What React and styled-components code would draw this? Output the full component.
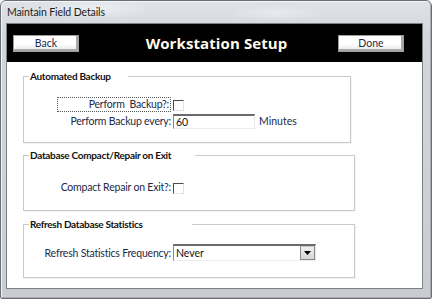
import styled, { createGlobalStyle } from 'styled-components';

const Global = createGlobalStyle`
  html, body {
    margin: 0;
    padding: 0;
    background: #ffffff;
  }
`;

// Styles
const Window = styled.div`
  box-sizing: border-box;
  width: 432px;
  height: 299px;
  display: flex;
  flex-direction: column;
  padding: 0 8px 9px 5px;
  border: 1px solid #6b6f75;
  border-radius: 6px 6px 2px 2px;
  background: linear-gradient(to bottom, #dfe3e8 0%, #d3d7dc 12%, #c9cdd2 100%);
  box-shadow: inset 1px 1px 0 #f4f6f8, inset -1px -1px 0 #a8acb1;
  font-family: Lato, "Noto Sans", sans-serif;
`;

const TitleBar = styled.div`
  height: 22px;
  display: flex;
  align-items: center;
  padding-left: 1px;
  font-size: 10.5px;
  letter-spacing: -0.1px;
  color: #1b1b1b;
  background: radial-gradient(ellipse 60px 10px at 90px 8px, rgba(255,255,255,0.45), transparent),
    radial-gradient(ellipse 50px 8px at 270px 12px, rgba(255,255,255,0.35), transparent);
`;

const Client = styled.div`
  flex: 1;
  display: flex;
  flex-direction: column;
  background: #ffffff;
  border: 1px solid #7d8187;
`;

const Header = styled.div`
  height: 38px;
  display: grid;
  grid-template-columns: 1fr auto 1fr;
  align-items: center;
  background: #000000;
  padding: 0 18px 0 6px;
`;

const Title = styled.div`
  padding-left: 16px;
  font-family: "Open Sans", "Noto Sans", sans-serif;
  font-weight: 700;
  font-size: 15px;
  color: #fffbe8;
  letter-spacing: 0.1px;
`;

const Button = styled.button`
  justify-self: ${p => (p.$right ? 'end' : 'start')};
  box-sizing: border-box;
  width: 66px;
  height: 17px;
  padding: 0;
  font-family: Lato, "Noto Sans", sans-serif;
  font-size: 10.5px;
  line-height: 13px;
  color: #1c2a48;
  background: linear-gradient(to bottom, #ffffff 0%, #ffffff 55%, #e4e4e4 100%);
  border: 1px solid #9c9c9c;
  box-shadow: inset -2px -2px 0 #a9a9a9, inset 1px 1px 0 #ffffff;
`;

const Body = styled.div`
  display: flex;
  flex-direction: column;
  padding: 8px 0 0 16px;
`;

const Group = styled.fieldset`
  box-sizing: border-box;
  width: ${p => p.$width}px;
  margin: ${p => p.$top}px 0 0 0;
  padding: ${p => p.$pt}px 0 ${p => p.$pb}px 0;
  border: 1px solid #c9c9c9;
  box-shadow: 1px 1px 0 #f4f4f4;
  display: flex;
  flex-direction: column;
  gap: 1px;
  min-width: 0;
`;

const Legend = styled.legend`
  box-sizing: border-box;
  margin-left: 5px;
  padding: 0 ${p => p.$gap}px 0 1px;
  white-space: nowrap;
  font-size: 10px;
  letter-spacing: -0.3px;
  line-height: 13px;
  font-weight: 700;
  color: #111111;
`;

const Row = styled.div`
  display: flex;
  align-items: center;
  height: ${p => p.$h || 16}px;
`;

const Label = styled.div`
  width: 147px;
  flex: none;
  display: flex;
  justify-content: flex-end;
  font-size: 10.5px;
  letter-spacing: -0.2px;
  color: #1c2a48;
  white-space: pre;
`;

const Focused = styled.span`
  box-sizing: border-box;
  width: 114px;
  height: 15px;
  display: flex;
  align-items: center;
  justify-content: flex-end;
  border: 1px dotted #555555;
  padding-right: 1px;
`;

const Check = styled.span`
  box-sizing: border-box;
  width: 11px;
  height: 11px;
  margin: 3px 0 0 2px;
  background: #ffffff;
  border-top: 1px solid #4a4a4a;
  border-left: 1px solid #4a4a4a;
  border-right: 1px solid #e2e2e2;
  border-bottom: 1px solid #e2e2e2;
`;

const TextBox = styled.div`
  box-sizing: border-box;
  width: ${p => p.$width}px;
  height: ${p => p.$height}px;
  margin-left: 2px;
  display: flex;
  align-items: center;
  justify-content: space-between;
  padding-left: 2px;
  font-size: 10.5px;
  color: #111111;
  background: #ffffff;
  border-top: 2px solid #6a6a6a;
  border-left: 1px solid #8a8a8a;
  border-right: 1px solid #e6e6e6;
  border-bottom: 1px solid #ededed;
`;

const DropButton = styled.span`
  box-sizing: border-box;
  width: 15px;
  height: 14px;
  display: flex;
  align-items: center;
  justify-content: center;
  background: linear-gradient(to bottom, #f0f0f0, #d6d6d6);
  border: 1px solid #8a8a8a;
  border-top-color: #c8c8c8;
`;

const Unit = styled.span`
  margin-left: 4px;
  font-size: 10.5px;
  color: #1c2a48;
`;
// End Styles

function App() {
  return (
    <>
      <Global />
      <Window>
        <TitleBar>Maintain Field Details</TitleBar>
        <Client>
          <Header>
            <Button>Back</Button>
            <Title>Workstation Setup</Title>
            <Button $right>Done</Button>
          </Header>
          <Body>
            <Group $width={328} $top={0} $pt={13} $pb={13}>
              <Legend $gap={17}>Automated Backup</Legend>
              <Row>
                <Label>
                  <Focused>Perform  Backup?:</Focused>
                </Label>
                <Check />
              </Row>
              <Row>
                <Label>Perform Backup every:</Label>
                <TextBox $width={82} $height={15}>60</TextBox>
                <Unit>Minutes</Unit>
              </Row>
            </Group>

            <Group $width={332} $top={6} $pt={17} $pb={15}>
              <Legend $gap={24}>Database Compact/Repair on Exit</Legend>
              <Row>
                <Label>Compact Repair on Exit?:</Label>
                <Check />
              </Row>
            </Group>

            <Group $width={332} $top={7} $pt={13} $pb={16}>
              <Legend $gap={49}>Refresh Database Statistics</Legend>
              <Row $h={17}>
                <Label>Refresh Statistics Frequency:</Label>
                <TextBox $width={143} $height={17}>
                  Never
                  <DropButton>
                    <svg width="7" height="4" viewBox="0 0 7 4">
                      <path d="M0 0 H7 L3.5 4 Z" fill="#000" />
                    </svg>
                  </DropButton>
                </TextBox>
              </Row>
            </Group>
          </Body>
        </Client>
      </Window>
    </>
  );
}

export default App;
